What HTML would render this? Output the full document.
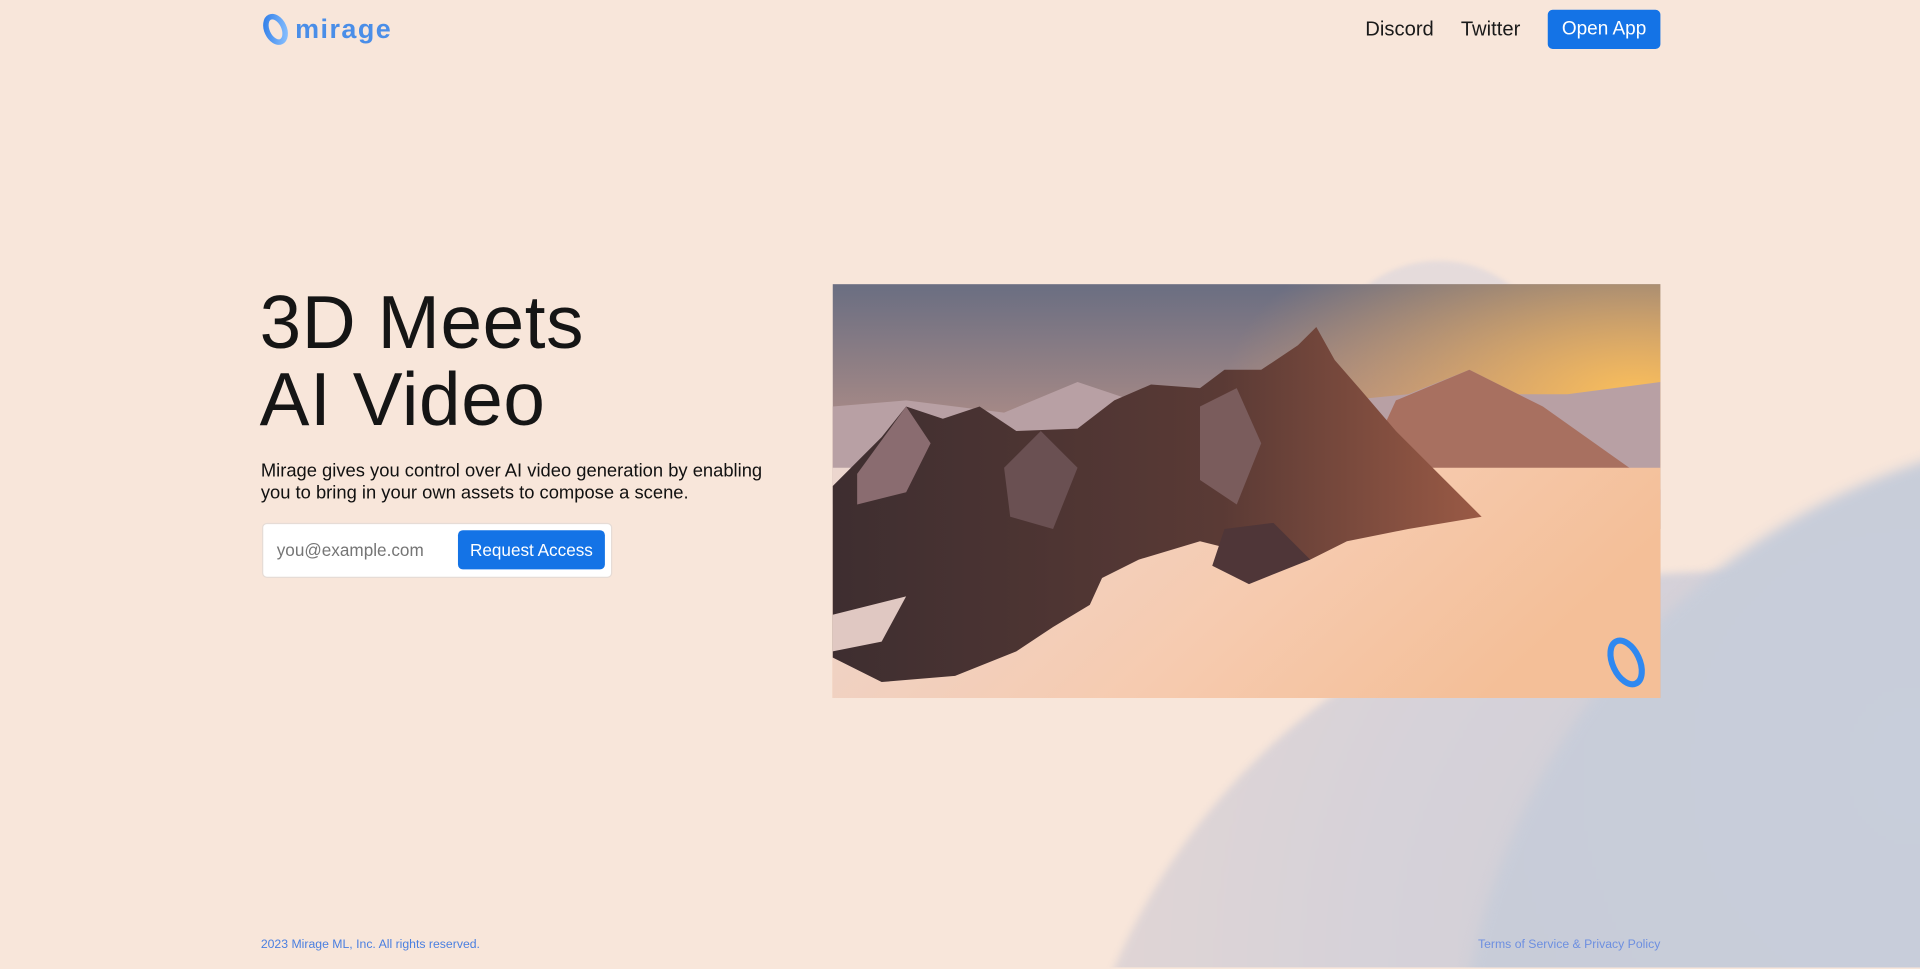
<!DOCTYPE html>
<html><head><meta charset="utf-8"><style>
html,body{margin:0;padding:0;width:1920px;height:969px;overflow:hidden;background:#f8e6da;}
#w{position:absolute;left:0;top:0;width:1568px;height:790px;transform:scale(1.22449);transform-origin:0 0;font-family:"Liberation Sans",sans-serif;overflow:hidden;}
.a{position:absolute;}
</style></head><body><div id="w">
<div class="a" style="left:1080px;top:213px;width:190px;height:190px;border-radius:50%;background:radial-gradient(circle at 50% 30%,#e6dcdc,#e2d8d9);filter:blur(2px)"></div>
<div class="a" style="left:867px;top:467px;width:1066px;height:1066px;border-radius:50%;background:radial-gradient(circle at 60% 30%,#cfcdd7 0%,#d6d2d9 40%,#e4d6d3 70%,#eedcd2 100%);filter:blur(3px)"></div>
<div class="a" style="left:1190px;top:350px;width:1100px;height:1100px;border-radius:50%;background:radial-gradient(circle at 35% 25%,#c8cedb 0%,#c8ccd8 40%,#cdccd6 70%);filter:blur(5px)"></div>

<svg class="a" style="left:213px;top:10px" width="26" height="28" viewBox="0 0 26 28"><defs><linearGradient id="lg" x1="0" y1="0" x2="1" y2="1"><stop offset="0" stop-color="#2f7de8"/><stop offset="1" stop-color="#8cc2ff"/></linearGradient></defs><ellipse cx="12" cy="14" rx="7" ry="11" transform="rotate(-25 12 14)" fill="none" stroke="url(#lg)" stroke-width="4.5"/></svg>
<div class="a" style="left:241px;top:11px;font-size:22px;color:#4a8ee8;font-weight:bold;letter-spacing:1.2px">mirage</div>

<div class="a" style="left:1115px;top:15px;font-size:16.5px;color:#1a1a1a">Discord</div>
<div class="a" style="left:1193px;top:15px;font-size:16.5px;color:#1a1a1a">Twitter</div>
<div class="a" style="left:1264px;top:8px;width:92px;height:32px;border-radius:4px;background:#1473e6;color:#fff;font-size:15.5px;text-align:center;line-height:32px">Open App</div>

<div class="a" style="left:212px;top:232px;font-size:61px;line-height:63px;color:#151515;letter-spacing:0.5px">3D Meets<br>AI Video</div>
<div class="a" style="left:213px;top:376px;font-size:15px;line-height:17.5px;color:#111;width:425px">Mirage gives you control over AI video generation by enabling you to bring in your own assets to compose a scene.</div>

<div class="a" style="left:214px;top:427px;width:284px;height:43px;border-radius:4px;background:#fff;border:1px solid #e6dcd6"></div>
<div class="a" style="left:226px;top:441px;font-size:14px;color:#757575">you@example.com</div>
<div class="a" style="left:374px;top:433px;width:120px;height:32px;border-radius:4px;background:#1473e6;color:#fff;font-size:14px;text-align:center;line-height:32px">Request Access</div>

<svg class="a" style="left:680px;top:232px" width="676" height="338" viewBox="0 0 676 338">
<defs>
<linearGradient id="sky" x1="0" y1="0" x2="0" y2="1"><stop offset="0" stop-color="#6a6e82"/><stop offset="0.4" stop-color="#b59087"/><stop offset="1" stop-color="#e8a070"/></linearGradient>
<radialGradient id="sun" cx="0.97" cy="0.27" r="0.5"><stop offset="0" stop-color="#ffc258" stop-opacity="0.95"/><stop offset="1" stop-color="#ffb060" stop-opacity="0"/></radialGradient>
<linearGradient id="snow" x1="0" y1="0" x2="1" y2="0.3"><stop offset="0" stop-color="#ecd6cf"/><stop offset="0.6" stop-color="#f6cbb0"/><stop offset="1" stop-color="#f4bf98"/></linearGradient>
<linearGradient id="mt" x1="0" y1="0" x2="1" y2="0"><stop offset="0" stop-color="#3e2e30"/><stop offset="0.6" stop-color="#5a3a35"/><stop offset="1" stop-color="#9a5a45"/></linearGradient>
</defs>
<rect width="676" height="338" fill="url(#sky)"/>
<rect width="676" height="338" fill="url(#sun)"/>
<polygon points="0,100 60,95 140,105 200,80 260,100 330,95 420,95 470,90 520,70 560,90 600,90 676,80 676,180 0,180" fill="#b8a0a4"/>
<polygon points="460,95 520,70 580,100 676,168 676,200 430,160" fill="#a87060"/>
<polygon points="0,200 0,150 676,150 676,338 0,338" fill="url(#snow)"/>
<polygon points="0,165 40,125 60,100 90,110 120,100 150,120 200,118 230,95 260,82 300,85 320,70 350,70 380,50 395,35 410,62 430,85 460,120 500,160 530,190 470,200 420,210 390,225 340,220 300,210 250,225 220,240 210,262 180,280 150,300 100,320 40,325 0,305" fill="url(#mt)"/>
<polygon points="20,155 60,100 80,130 60,170 20,180" fill="#8a6c70"/>
<polygon points="300,100 330,85 350,130 330,180 300,160" fill="#7a5c5c"/>
<polygon points="140,150 170,120 200,150 180,200 145,190" fill="#6a5052"/>
<polygon points="320,200 360,195 390,225 340,245 310,230" fill="#4f3638"/>
<polygon points="0,270 60,255 40,292 0,300" fill="#e0c8c2"/>
<ellipse cx="648" cy="309" rx="11" ry="19" transform="rotate(-25 648 309)" fill="none" stroke="#2f88f0" stroke-width="5"/>
</svg>

<div class="a" style="left:213px;top:766px;font-size:10px;color:#4a7fe0">2023 Mirage ML, Inc. All rights reserved.</div>
<div class="a" style="left:1207px;top:766px;font-size:10px;color:#6d8fe0">Terms of Service &amp; Privacy Policy</div>
</div></body></html>
